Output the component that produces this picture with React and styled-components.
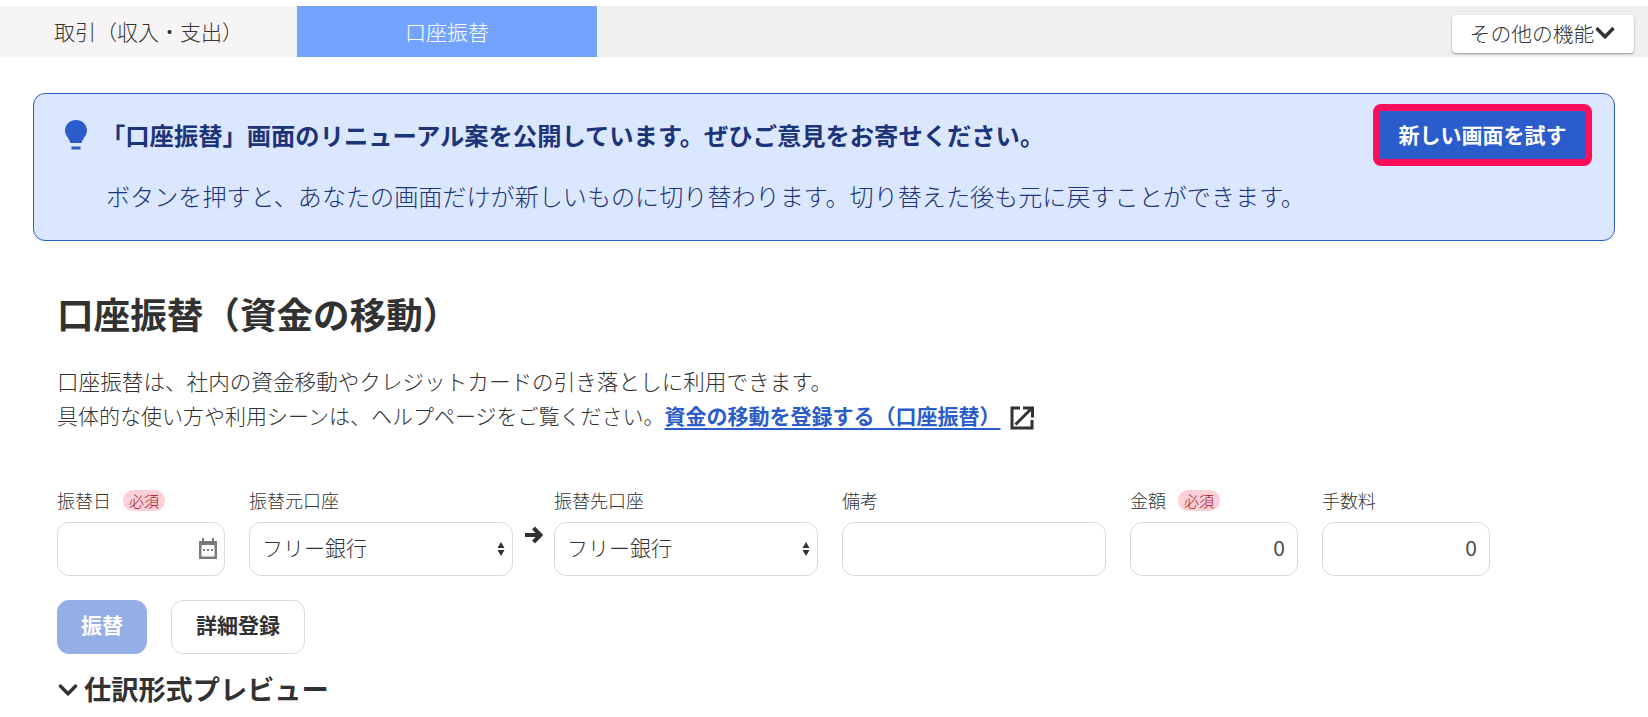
import React from "react"
import styled, { createGlobalStyle } from "styled-components"
import { FaChevronDown } from "react-icons/fa"

const GlobalStyle = createGlobalStyle`
  html, body {
    margin: 0;
    background: #fff;
    overflow: hidden;
  }
  body {
    font-family: "Noto Sans CJK JP", "Noto Sans", sans-serif;
    font-weight: 300;
    color: #323232;
  }
`

const Page = styled.div`
  height: 717px;
  padding-top: 6px;
  box-sizing: border-box;
  overflow: hidden;
`
const TabBar = styled.div`
  position: relative;
  display: flex;
  height: 51px;
  background: #efefef;
`
const Tab = styled.div`
  width: ${props => props.$width}px;
  display: flex;
  align-items: center;
  justify-content: center;
  padding-bottom: 2px;
  box-sizing: border-box;
  font-size: 21px;
  color: ${props => (props.$active ? "#fff" : "#323232")};
  background: ${props => (props.$active ? "#72a4ff" : "#f6f4f4")};
`
const MoreButton = styled.div`
  position: absolute;
  left: 1452px;
  top: 9px;
  width: 182px;
  height: 38px;
  box-sizing: border-box;
  padding-bottom: 2px;
  display: flex;
  align-items: center;
  justify-content: center;
  background: #fff;
  border-radius: 4px;
  box-shadow: 0 1px 2px rgba(0, 0, 0, 0.4);
  font-size: 20.8px;
  svg {
    width: 22px;
    height: 22px;
    color: #323232;
  }
`
const Banner = styled.section`
  margin: 36px 33px 0 33px;
  height: 148px;
  box-sizing: border-box;
  border: 1px solid #2b5ccb;
  border-radius: 12px;
  background: #dbe7fe;
  color: #1c3478;
  padding: 10px 22px 0 31px;
`
const BannerTop = styled.div`
  display: flex;
  align-items: center;
  height: 62px;
`
const BulbIcon = styled.svg`
  width: 22px;
  height: 30px;
  fill: #2b5ccb;
  margin-right: 14px;
  flex: none;
`
const BannerTitle = styled.div`
  font-size: 24.3px;
  font-weight: 700;
  flex: 1;
  padding-bottom: 2px;
  white-space: nowrap;
`
const TryButton = styled.div`
  width: 219px;
  height: 62px;
  box-sizing: border-box;
  border: 7px solid #ff0f5b;
  border-radius: 8px;
  background: #2b5ccb;
  color: #fff;
  font-size: 21px;
  font-weight: 700;
  padding-bottom: 2px;
  display: flex;
  align-items: center;
  justify-content: center;
`
const BannerText = styled.div`
  font-size: 24.1px;
  margin: 12px 0 0 41px;
  white-space: nowrap;
`
const Content = styled.main`
  padding: 0 0 0 57px;
`
const Title = styled.h1`
  margin: 46px 0 0;
  font-size: 36.6px;
  line-height: 54px;
  font-weight: 700;
`
const Description = styled.div`
  margin: 23px 0 0;
  white-space: nowrap;
`
const DescriptionLine = styled.div`
  height: 34px;
  line-height: 34px;
  font-size: ${props => props.$size}px;
`
const HelpLink = styled.a`
  color: #2b5ccb;
  font-weight: 700;
  text-decoration: underline;
  text-underline-offset: 4px;
`
const ExternalIcon = styled.svg`
  width: 24px;
  height: 24px;
  margin-left: 9px;
  vertical-align: -6px;
  fill: none;
  stroke: #323232;
  stroke-width: 3;
`
const FormRow = styled.div`
  display: flex;
  align-items: flex-start;
  margin-top: 56px;
`
const Field = styled.div`
  width: ${props => props.$width}px;
  margin-right: ${props => props.$gap ?? 24}px;
  flex: none;
`
const FieldLabel = styled.div`
  display: flex;
  align-items: center;
  height: 24px;
  font-size: 18px;
  margin-bottom: 10px;
  white-space: nowrap;
`
const RequiredBadge = styled.span`
  margin-left: 12px;
  padding: 0 6px;
  height: 21px;
  display: flex;
  align-items: center;
  border-radius: 11px;
  background: #fbd0d6;
  color: #a50d2b;
  font-size: 15px;
`
const InputBox = styled.div`
  position: relative;
  height: 54px;
`
const TextInput = styled.input`
  width: 100%;
  height: 100%;
  box-sizing: border-box;
  border: 1px solid #d9d9d9;
  border-radius: 12px;
  padding: 0 12px 5px;
  background: #fff;
  font: inherit;
  font-weight: 400;
  font-size: 21px;
  color: #4a4a4a;
  text-align: ${props => (props.$right ? "right" : "left")};
  outline: none;
`
const Select = styled.select`
  width: 100%;
  height: 100%;
  box-sizing: border-box;
  border: 1px solid #d9d9d9;
  border-radius: 12px;
  padding: 0 12px 5px;
  background: #fff;
  font: inherit;
  font-size: 21px;
  color: #323232;
  appearance: none;
  outline: none;
`
const Spinner = styled.svg`
  position: absolute;
  right: 8px;
  top: 19px;
  width: 8px;
  height: 16px;
  fill: #323232;
`
const CalendarIcon = styled.svg`
  position: absolute;
  right: 8px;
  top: 16px;
  width: 18px;
  height: 21px;
  fill: #7a7a7a;
`
const ArrowBox = styled.div`
  width: 41px;
  flex: none;
  padding-top: 38px;
  display: flex;
  justify-content: center;
`
const ArrowIcon = styled.svg`
  width: 18px;
  height: 18px;
  fill: none;
  stroke: #323232;
  stroke-width: 4;
`
const ButtonRow = styled.div`
  display: flex;
  gap: 24px;
  margin-top: 24px;
`
const Button = styled.div`
  width: ${props => props.$width}px;
  height: 54px;
  box-sizing: border-box;
  border-radius: 12px;
  padding-bottom: 6px;
  display: flex;
  align-items: center;
  justify-content: center;
  font-size: 21px;
  font-weight: 700;
  color: ${props => (props.$primary ? "#fff" : "#323232")};
  background: ${props => (props.$primary ? "#95aee5" : "#fff")};
  border: 1px solid ${props => (props.$primary ? "#95aee5" : "#d9d9d9")};
`
const PreviewHeading = styled.h2`
  display: flex;
  align-items: center;
  margin: 15px 0 0;
  font-size: 27.2px;
  line-height: 38px;
  font-weight: 700;
  svg {
    width: 22px;
    height: 22px;
    margin-right: 5px;
    margin-top: 3px;
    color: #323232;
  }
`

const SelectField = () => (
  <InputBox>
    <Select defaultValue="free">
      <option value="free">フリー銀行</option>
    </Select>
    <Spinner viewBox="0 0 8 16">
      <path d="M4 1 L7.5 7 H0.5 Z M4 15 L0.5 9 H7.5 Z" />
    </Spinner>
  </InputBox>
)

export default function App() {
  return (
    <Page>
      <GlobalStyle />
      <TabBar>
        <Tab $width={297}>取引（収入・支出）</Tab>
        <Tab $width={300} $active>口座振替</Tab>
        <MoreButton>その他の機能<FaChevronDown /></MoreButton>
      </TabBar>
      <Banner>
        <BannerTop>
          <BulbIcon viewBox="0 0 22 30">
            <path d="M11 0 C17 0 22 4.6 22 10.6 C22 14.6 19.6 17 18 19.4 C17.2 20.6 16.8 21.6 16.6 23 H5.4 C5.2 21.6 4.8 20.6 4 19.4 C2.4 17 0 14.6 0 10.6 C0 4.6 5 0 11 0 Z" />
            <path d="M6.5 26.5 H15.5 V29.5 H6.5 Z" />
          </BulbIcon>
          <BannerTitle>「口座振替」画面のリニューアル案を公開しています。ぜひご意見をお寄せください。</BannerTitle>
          <TryButton>新しい画面を試す</TryButton>
        </BannerTop>
        <BannerText>ボタンを押すと、あなたの画面だけが新しいものに切り替わります。切り替えた後も元に戻すことができます。</BannerText>
      </Banner>
      <Content>
        <Title>口座振替（資金の移動）</Title>
        <Description>
          <DescriptionLine $size={21.6}>口座振替は、社内の資金移動やクレジットカードの引き落としに利用できます。</DescriptionLine>
          <DescriptionLine $size={21}>
            具体的な使い方や利用シーンは、ヘルプページをご覧ください。<HelpLink href="#">資金の移動を登録する（口座振替）</HelpLink>
            <ExternalIcon viewBox="0 0 24 24">
              <path d="M10 2 H2 V22 H22 V14" />
              <path d="M5.5 18.5 L21 3" />
              <path d="M13 2 H22.5 V11.5" />
            </ExternalIcon>
          </DescriptionLine>
        </Description>
        <FormRow>
          <Field $width={168}>
            <FieldLabel>振替日<RequiredBadge>必須</RequiredBadge></FieldLabel>
            <InputBox>
              <TextInput />
              <CalendarIcon viewBox="0 0 18 21">
                <path fillRule="evenodd" d="M3 0 H5 V3 H13 V0 H15 V3 H18 V21 H0 V3 H3 Z M2.5 7 V18.5 H15.5 V7 Z" />
                <path d="M4 11 H6 V13 H4 Z M8 11 H10 V13 H8 Z M12 11 H14 V13 H12 Z" />
              </CalendarIcon>
            </InputBox>
          </Field>
          <Field $width={264} $gap={0}>
            <FieldLabel>振替元口座</FieldLabel>
            <SelectField />
          </Field>
          <ArrowBox>
            <ArrowIcon viewBox="0 0 18 18">
              <path d="M0 9 H15" />
              <path d="M8.5 2 L15.5 9 L8.5 16" />
            </ArrowIcon>
          </ArrowBox>
          <Field $width={264}>
            <FieldLabel>振替先口座</FieldLabel>
            <SelectField />
          </Field>
          <Field $width={264}>
            <FieldLabel>備考</FieldLabel>
            <InputBox><TextInput /></InputBox>
          </Field>
          <Field $width={168}>
            <FieldLabel>金額<RequiredBadge>必須</RequiredBadge></FieldLabel>
            <InputBox><TextInput $right defaultValue="0" /></InputBox>
          </Field>
          <Field $width={168}>
            <FieldLabel>手数料</FieldLabel>
            <InputBox><TextInput $right defaultValue="0" /></InputBox>
          </Field>
        </FormRow>
        <ButtonRow>
          <Button $width={90} $primary>振替</Button>
          <Button $width={134}>詳細登録</Button>
        </ButtonRow>
        <PreviewHeading><FaChevronDown />仕訳形式プレビュー</PreviewHeading>
      </Content>
    </Page>
  )
}
